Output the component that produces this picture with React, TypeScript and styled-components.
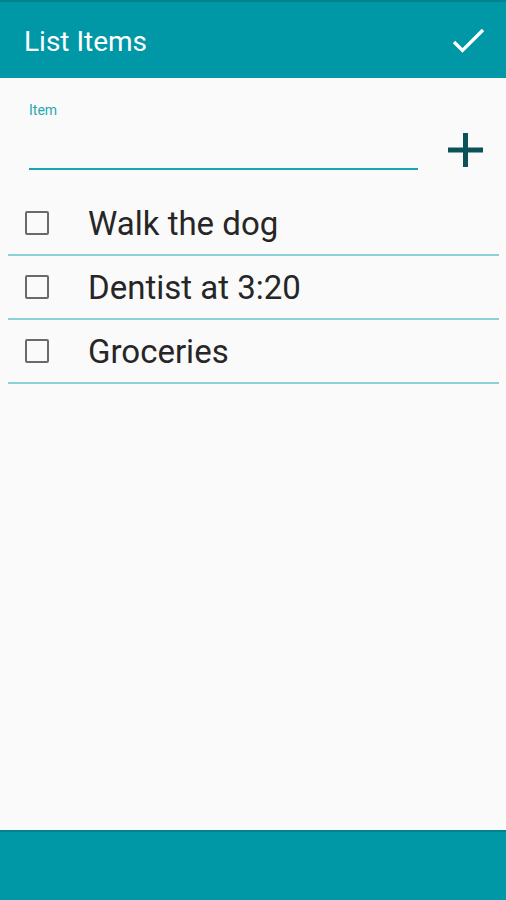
import styled, { createGlobalStyle } from 'styled-components'

const items = ['Walk the dog', 'Dentist at 3:20', 'Groceries']

export default function App() {
	return (
		<>
			<GlobalStyle />
			<Screen>
				<AppBar>
					<Title>List Items</Title>
					<CheckIcon width="36" height="36" viewBox="0 0 36 36">
						<path d="M4 19l8.5 8.5L33 7" fill="none" stroke="#fff" strokeWidth="3.3" />
					</CheckIcon>
				</AppBar>

				<Content>
					<InputRow>
						<Field>
							<Label>Item</Label>
							<Input />
						</Field>
						<AddButton aria-label="add">
							<svg width="35" height="36" viewBox="0 0 35 36">
								<path d="M17.5 1v34M0 18h35" stroke="#0b5259" strokeWidth="5" />
							</svg>
						</AddButton>
					</InputRow>

					<List>
						{items.map((item) => (
							<Row key={item}>
								<Box />
								<ItemText>{item}</ItemText>
							</Row>
						))}
					</List>
				</Content>

				<BottomBar />
			</Screen>
		</>
	)
}

const GlobalStyle = createGlobalStyle`
	body {
		margin: 0;
		font-family: Roboto, 'Noto Sans', sans-serif;
		background: #fafafa;
	}
`

const Screen = styled.div`
	width: 506px;
	height: 900px;
	display: flex;
	flex-direction: column;
	background: #fafafa;
`

const AppBar = styled.header`
	height: 78px;
	flex-shrink: 0;
	background: #0097a7;
	border-top: 2px solid #00838f;
	box-sizing: border-box;
	display: flex;
	align-items: center;
	justify-content: space-between;
	padding: 2px 20px 0 24px;
`

const Title = styled.h1`
	margin: 0;
	color: #fff;
	font-size: 28px;
	font-weight: 400;
`

const CheckIcon = styled.svg`
	display: block;
`

const Content = styled.main`
	flex: 1;
	padding: 0 7px 0 8px;
`

const InputRow = styled.div`
	display: flex;
	align-items: flex-end;
	padding: 22px 0 0 21px;
`

const Field = styled.div`
	width: 389px;
	display: flex;
	flex-direction: column;
`

const Label = styled.span`
	color: #26a8b8;
	font-size: 14px;
	line-height: 20px;
`

const Input = styled.div`
	height: 48px;
	border-bottom: 2px solid #1ba3b3;
`

const AddButton = styled.button`
	border: 0;
	background: none;
	padding: 0;
	margin: 0 0 2px 30px;
	display: flex;
`

const List = styled.ul`
	list-style: none;
	margin: 22px 0 0;
	padding: 0;
`

const Row = styled.li`
	height: 62px;
	display: flex;
	align-items: center;
	border-bottom: 2px solid #8ed0d9;
	padding-left: 17px;
`

const Box = styled.span`
	width: 20px;
	height: 20px;
	border: 2px solid #6a6a6a;
	border-radius: 2px;
	margin-right: 39px;
`

const ItemText = styled.span`
	font-size: 33px;
	font-weight: 400;
	color: #262626;
`

const BottomBar = styled.footer`
	height: 70px;
	flex-shrink: 0;
	background: #0097a7;
	border-top: 2px solid #00838f;
	box-sizing: border-box;
`
